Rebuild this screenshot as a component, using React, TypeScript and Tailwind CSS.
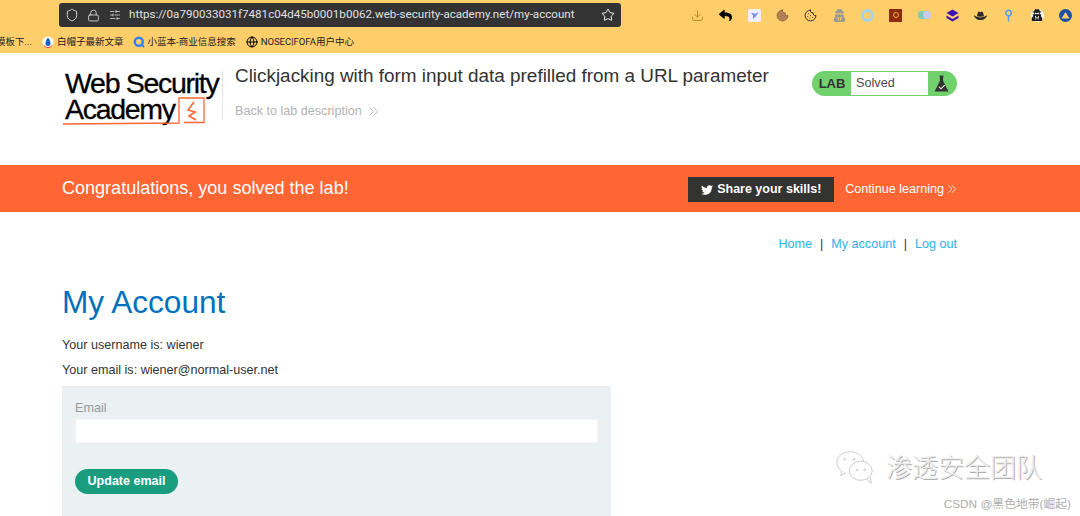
import { Shield, Lock, Star, SlidersHorizontal, Download, Cookie, Globe } from "lucide-react"
import { FaTwitter, FaReply, FaUserSecret, FaHatCowboy } from "react-icons/fa"

const bookmarks = [
  { label: "白帽子最新文章", icon: "bm", gap: "ml-[10px]" },
  { label: "小蓝本-商业信息搜索", icon: "q", gap: "ml-[9px]" },
  { label: "NOSEC|FOFA用户中心", icon: "globe", gap: "ml-[10px]" },
]

function Chevrons({ className }: { className: string }) {
  return (
    <svg viewBox="0 0 12 12" className={className} fill="none" stroke="currentColor" strokeWidth="1">
      <path d="M1.5 1.5 6 6l-4.5 4.5M6 1.5 10.5 6 6 10.5" />
    </svg>
  )
}

function BookmarkIcon({ icon }: { icon: string }) {
  if (icon === "bm") {
    return (
      <svg viewBox="0 0 12 12" className="w-3 h-3">
        <circle cx="6" cy="6" r="5.5" fill="#fff" />
        <path d="M6 1.5C8 4 8.5 6 8.5 7.5a2.5 2.5 0 0 1-5 0C3.500 6 4 4 6 1.500z" fill="#1565c0" />
        <path d="M2 9.500a5 5 0 0 0 8 0" stroke="#e53935" strokeWidth="1" fill="none" />
      </svg>
    )
  }
  if (icon === "q") {
    return (
      <svg viewBox="0 0 12 12" className="w-3 h-3" fill="none">
        <circle cx="5.800" cy="5.800" r="4" stroke="#2f80ed" strokeWidth="2.400" />
        <path d="M8 8l3 3" stroke="#2f80ed" strokeWidth="2" />
      </svg>
    )
  }
  return <Globe className="w-3 h-3 text-black" strokeWidth={2} />
}

function ExtensionIcons() {
  return (
    <div className="flex items-center gap-[15.300px] pr-[8px] h-[30px]">
      <Download className="w-[13px] h-[13px] text-[#b98a2c]" strokeWidth={1.8} />
      <FaReply className="w-[13px] h-[13px] text-black" />
      <div className="w-[13px] h-[13px] rounded-[2px] bg-[#eef0fb] flex items-center justify-center">
        <svg viewBox="0 0 10 10" className="w-[9px] h-[9px]">
          <path d="M9.500 1 6 3 1 2 3.500 5 3 9 6.500 6z" fill="#7a8cf0" />
        </svg>
      </div>
      <Cookie className="w-[13px] h-[13px] text-[#8a5a3c] fill-[#b5835a]" strokeWidth={1.5} />
      <Cookie className="w-[13px] h-[13px] text-[#2b2b2b]" strokeWidth={1.8} />
      <FaUserSecret className="w-[13px] h-[13px] text-[#9c9a92]" />
      <div className="w-[13px] h-[13px] rounded-full border-[3px] border-[#a5d3ec]" />
      <div className="w-[13px] h-[13px] bg-[#8e2a10] flex items-center justify-center">
        <div className="w-[6px] h-[6px] rounded-full border border-[#f0b040]" />
      </div>
      <div className="w-[13px] h-[8px] rounded-full bg-[#7fc9b5] flex justify-end">
        <div className="w-[8px] h-[8px] rounded-full bg-[#c9c8ee]" />
      </div>
      <svg viewBox="0 0 13 13" className="w-[13px] h-[13px]">
        <path d="M6.500 0.500 12.500 4 6.500 7.500 0.500 4z" fill="#3d12b0" />
        <path d="M0.500 6.500 6.500 10 12.500 6.500 12.500 9 6.500 12.500 0.500 9z" fill="#3d12b0" />
      </svg>
      <FaHatCowboy className="w-[13px] h-[13px] text-[#2c2c2c]" />
      <svg viewBox="0 0 13 13" className="w-[13px] h-[13px]" fill="none" stroke="#4f9ee8" strokeWidth="1.400">
        <circle cx="6.500" cy="4" r="2.800" />
        <path d="M6.500 7v5.500" />
      </svg>
      <div className="w-[13px] h-[13px] rounded-full bg-white flex items-center justify-center">
        <FaUserSecret className="w-[12px] h-[12px] text-[#1c1c1c]" />
      </div>
      <svg viewBox="0 0 13 13" className="w-[13px] h-[13px]">
        <circle cx="6.500" cy="6.500" r="6.500" fill="#1a4fa3" />
        <path d="M6.500 3 10.500 9.500H2.500z" fill="#fdce69" />
      </svg>
    </div>
  )
}

function BrowserBar() {
  return (
    <div className="h-[53px] bg-[#fdce69] font-['Roboto','Noto_Sans_CJK_SC',sans-serif]">
      <div className="flex items-start pt-[3px] h-[33px]">
        <div className="ml-[59px] w-[562px] h-[24px] rounded-[3px] bg-[#333333] flex items-center pl-[6px] pr-[6px] text-[#d8d8d8]">
          <Shield className="w-[14px] h-[14px]" strokeWidth={1.6} />
          <Lock className="w-[13px] h-[13px] ml-[8px]" strokeWidth={1.6} />
          <SlidersHorizontal className="w-[12px] h-[12px] ml-[9px]" strokeWidth={1.6} />
          <span className="ml-[8px] text-[11.600px] whitespace-nowrap text-[#e0e0e0]">
            https://0a790033031f7481c04d45b0001b0062.web-security-academy.net/my-account
          </span>
          <Star className="w-[14px] h-[14px] ml-auto text-white" strokeWidth={1.6} />
        </div>
        <div className="ml-auto -mt-[3px]">
          <ExtensionIcons />
        </div>
      </div>
      <div className="flex items-center h-[18px] text-[9.500px] text-[#222222] whitespace-nowrap overflow-hidden">
        <span className="w-[32px] shrink-0 flex justify-end overflow-hidden">模板下...</span>
        {bookmarks.map((item) => (
          <span key={item.label} className={`flex items-center gap-[3px] ${item.gap}`}>
            <BookmarkIcon icon={item.icon} />
            {item.label}
          </span>
        ))}
      </div>
    </div>
  )
}

function LabLogo() {
  return (
    <div className="relative w-[157px] h-[58px] text-black font-['Liberation_Sans',sans-serif] text-[28.500px] leading-[27px] tracking-[-1.300px] [-webkit-text-stroke:0.3px_black]">
      <div className="whitespace-nowrap pl-[3px] pt-[1px]">Web Security</div>
      <div className="whitespace-nowrap pl-[3px] -mt-[1px]">Academy</div>
      <svg viewBox="0 0 157 58" className="absolute inset-0 w-[157px] h-[58px]" fill="none" stroke="#ff6633" strokeWidth="1.300">
        <path d="M1 55 117 54V29H142V53.500H122" />
        <path d="M132 33 126 41 133 43 127 47 134 51" strokeWidth="1.600" />
      </svg>
    </div>
  )
}

export default function App() {
  return (
    <div className="h-[516px] w-[1080px] overflow-hidden relative bg-white font-['Liberation_Sans',Arial,sans-serif]">
      <BrowserBar />

      <header className="h-[112px] flex items-start pl-[62px] pr-[123px] pt-[16px]">
        <LabLogo />
        <div className="ml-[3px] mt-[2px] h-[49px] border-l border-[#e6e6e6] pl-[12px]">
          <h2 className="text-[18.900px] leading-[24px] -mt-[7px] text-[#333332] whitespace-nowrap">
            Clickjacking with form input data prefilled from a URL parameter
          </h2>
          <a className="mt-[14px] flex items-center gap-[6px] text-[12.600px] leading-[18px] text-[#b3b3b3]">
            Back to lab description
            <Chevrons className="w-[11px] h-[11px]" />
          </a>
        </div>
        <div className="ml-auto mt-[2px] w-[145px] h-[25px] rounded-full bg-[#70d16d] flex items-stretch overflow-hidden p-px shrink-0">
          <span className="w-[38px] flex items-center justify-center text-[13px] font-bold text-[#333332]">LAB</span>
          <span className="w-[77px] bg-white flex items-center pl-[5px] text-[12.700px] text-[#4d4d4d]">Solved</span>
          <span className="flex-1 flex items-center justify-center pr-[2px]">
            <svg viewBox="0 0 14 16" className="w-[15px] h-[17px]">
              <path d="M5 0.500h4v1H8.500v4L13.500 15.500H0.500L5.500 5.500v-4H5z" fill="#333332" />
              <path d="M4.500 11l2 2 3.500-3.500" stroke="#dff5de" strokeWidth="1" fill="none" />
            </svg>
          </span>
        </div>
      </header>

      <section className="h-[47px] bg-[#ff6633] flex items-center px-[62px] pr-[123px] text-white">
        <h4 className="mt-[1px] text-[18.050px] font-normal">Congratulations, you solved the lab!</h4>
        <a className="ml-auto mt-[2px] h-[25px] w-[146px] bg-[#333332] flex items-center justify-center gap-[4px] text-[12.500px] font-bold whitespace-nowrap">
          <FaTwitter className="w-[12px] h-[12px]" />
          Share your skills!
        </a>
        <a className="ml-[11px] mt-[1px] flex items-center gap-[3px] text-[12.600px] whitespace-nowrap">
          Continue learning
          <Chevrons className="w-[10px] h-[10px]" />
        </a>
      </section>

      <main className="pl-[62px] pr-[123px]">
        <nav className="flex justify-end items-center mt-[24px] h-[16px] text-[12.600px] text-[#2fb0ee]">
          <a>Home</a>
          <span className="mx-[8px] text-[#333332]">|</span>
          <a>My account</a>
          <span className="mx-[8px] text-[#333332]">|</span>
          <a>Log out</a>
        </nav>
        <h1 className="mt-[31px] text-[31.600px] leading-[38px] text-[#0071bc]">My Account</h1>
        <p className="mt-[16px] text-[12.600px] leading-[16px] text-[#333332]">Your username is: wiener</p>
        <p className="mt-[9px] text-[12.600px] leading-[16px] text-[#333332]">Your email is: wiener@normal-user.net</p>
        <form className="mt-[8px] w-[549px] h-[130px] bg-[#ebf0f2] px-[13px] pt-[15px]">
          <label className="block text-[12.600px] leading-[15px] text-[#999999]">Email</label>
          <input className="block mt-[3px] w-[523px] h-[24px] bg-white border border-[#f2f4f5]" />
          <button
            type="button"
            className="mt-[26px] w-[103px] h-[25px] rounded-full bg-[#1a9c7f] text-white text-[12.500px] font-bold"
          >
            Update email
          </button>
        </form>
      </main>

      {/* watermark over the page */}
      <div className="absolute left-[835px] top-[449px] flex items-center gap-[9px]">
        <svg viewBox="0 0 44 36" className="w-[42px] h-[36px]" fill="none" stroke="#c9c9c9" strokeWidth="1">
          <path d="M16 2C8 2 2 7 2 13c0 4 2 7 5 9l-1 5 6-3" />
          <path d="M16 2c7 0 13 4 14 10" />
          <ellipse cx="27" cy="22" rx="12" ry="10" />
          <path d="M33 31l5 4-1-6" />
          <circle cx="10" cy="10" r="1" />
          <circle cx="20" cy="10" r="1" />
          <circle cx="23" cy="21" r="1" />
          <circle cx="31" cy="21" r="1" />
        </svg>
        <span className="text-[26px] leading-[30px] -mt-[3px] text-[#ececec] font-['Noto_Sans_CJK_SC',sans-serif] font-light [text-shadow:1px_1px_0_#b0b0b0] whitespace-nowrap">
          渗透安全团队
        </span>
      </div>
      <div className="absolute right-[9px] top-[496px] text-[11.800px] leading-[16px] text-[#aeaeae] font-['Liberation_Sans','Noto_Sans_CJK_SC',sans-serif] whitespace-nowrap">
        CSDN @黑色地带(崛起)
      </div>
    </div>
  )
}
